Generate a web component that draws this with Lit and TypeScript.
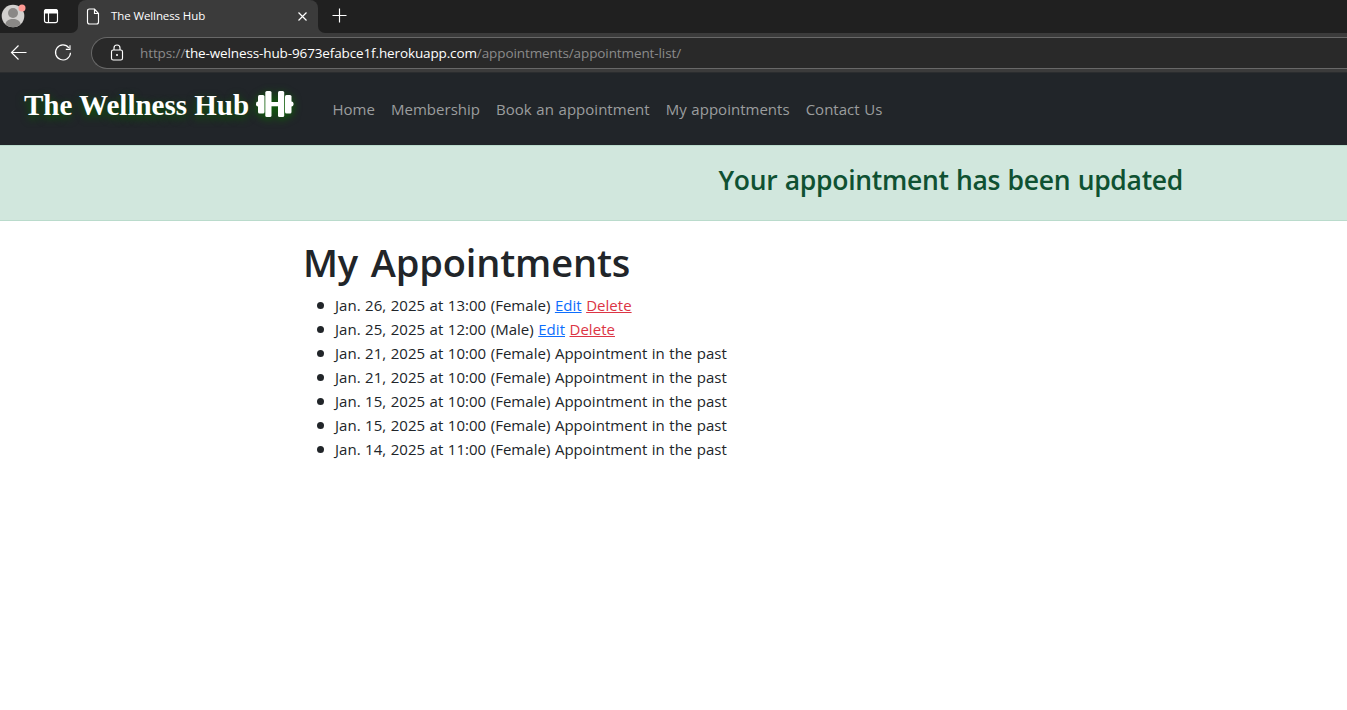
import { LitElement, html, css, nothing } from "lit";
import { customElement } from "lit/decorators.js";

const navLinks = ["Home", "Membership", "Book an appointment", "My appointments", "Contact Us"];

const appointments = [
  { when: "Jan. 26, 2025 at 13:00 (Female)", past: false },
  { when: "Jan. 25, 2025 at 12:00 (Male)", past: false },
  { when: "Jan. 21, 2025 at 10:00 (Female)", past: true },
  { when: "Jan. 21, 2025 at 10:00 (Female)", past: true },
  { when: "Jan. 15, 2025 at 10:00 (Female)", past: true },
  { when: "Jan. 15, 2025 at 10:00 (Female)", past: true },
  { when: "Jan. 14, 2025 at 11:00 (Female)", past: true },
];

@customElement("browser-chrome")
class BrowserChrome extends LitElement {
  static styles = css`
    :host { display: block; height: 73px; background: #3b3b3b; font-family: "Open Sans", "Noto Sans", sans-serif; }
    svg { display: block; flex: none; fill: none; stroke: #fff; stroke-width: 1.15; }
    .tabs { display: flex; height: 33px; background: #3b3b3b; }
    .left { width: 78px; height: 33px; background: #202020; border-bottom-right-radius: 7px; flex: none; }
    .tabwrap { background: #202020; flex: none; }
    .tab { display: flex; align-items: center; width: 240px; height: 33px; box-sizing: border-box; background: #3b3b3b; border-radius: 8px 8px 0 0; padding: 0 10px 0 8px; color: #fff; }
    .title { font-size: 11.5px; line-height: 30px; padding-bottom: 2px; flex: 1; margin-left: 10px; letter-spacing: -0.1px; white-space: nowrap; }
    .right { flex: 1; background: #202020; border-bottom-left-radius: 7px; }
    .bar { display: flex; height: 40px; box-sizing: border-box; border-bottom: 1px solid #2b2d2f; }
    .buttons { width: 91px; }
    .address { display: flex; align-items: center; flex: 1; height: 32px; box-sizing: border-box; margin-top: 4px; border: 1px solid #686868; border-right: 0; border-radius: 16px 0 0 16px; background: #292929; padding-left: 17px; }
    .url { margin-left: 15px; font-size: 13.5px; color: #8b8b8b; white-space: nowrap; line-height: 28px; letter-spacing: -0.1px; }
    .host { color: #fff; letter-spacing: -0.125px; }
  `;

  render() {
    return html`
      <div class="tabs">
        <div class="left">
          <svg width="78" height="33" viewBox="0 0 78 33">
            <circle cx="13" cy="16" r="11.3" fill="#d2d0ce" stroke="none" />
            <circle cx="13" cy="13" r="5" fill="#8a8886" stroke="none" />
            <path d="M5.5 24C6 20.5 9 19 13 19s7 1.500 7.500 5C17 28.300 9 28.300 5.500 24z" fill="#8a8886" stroke="none" />
            <circle cx="22" cy="8" r="3.500" fill="#ff9a94" stroke="none" />
            <rect x="44.500" y="9.600" width="13" height="13" rx="2.200" />
            <path d="M44.500 13V11.500Q44.500 9.500 46.500 9.500H55.500Q57.500 9.500 57.500 11.500V13z" fill="#fff" />
            <path d="M48.500 13v9.500" />
          </svg>
        </div>
        <div class="tabwrap">
          <div class="tab">
            <svg width="15" height="18" viewBox="0 0 15 18">
              <path d="M3.500 1H8.500L12.500 5.500V14Q12.500 16 10.500 16H3.500Q1.500 16 1.500 14V3Q1.500 1 3.500 1zM8.500 1V5.500H12.500" />
            </svg>
            <span class="title">The Wellness Hub</span>
            <svg width="11" height="11" viewBox="0 0 11 11"><path d="M1.500 1.500l8 8M9.500 1.500l-8 8" /></svg>
          </div>
        </div>
        <div class="right">
          <svg width="44" height="33" viewBox="0 0 44 33"><path d="M14.500 15.500h14M21.500 8.500v14" /></svg>
        </div>
      </div>
      <div class="bar">
        <svg class="buttons" width="91" height="39" viewBox="0 0 91 39">
          <path d="M26.500 19.500H11.500M18.500 12.500l-7 7 7 7" />
          <path d="M68.900 14.800A7.500 7.500 0 1 0 70.500 19.800M70 12.300V16.300H65.800" />
        </svg>
        <div class="address">
          <svg width="16" height="18" viewBox="0 0 16 18">
            <rect x="2.500" y="6" width="11" height="10" rx="1.800" />
            <path d="M5 6V4a3 3 0 0 1 6 0V6" />
            <circle cx="8" cy="11" r="1" fill="#fff" stroke="none" />
          </svg>
          <span class="url">https://<span class="host">the-welness-hub-9673efabce1f.herokuapp.com</span>/appointments/appointment-list/</span>
        </div>
      </div>
    `;
  }
}

@customElement("app-root")
class AppRoot extends LitElement {
  static styles = css`
    :host { display: block; height: 710px; overflow: hidden; background: #fff; color: #212529; font-family: "Open Sans", "Noto Sans", sans-serif; font-size: 15px; line-height: 24px; }
    .navbar { display: flex; height: 72px; background: #212529; }
    .brand { display: flex; margin-left: 24px; width: 300.500px; flex: none; color: #fff; font-family: "Liberation Serif", serif; font-size: 29px; font-weight: 700; line-height: 36px; padding-top: 14px; white-space: nowrap; text-shadow: 0 3px 8px #0a5c00; }
    .name { letter-spacing: 0; width: 226px; }
    .dumbbell { display: block; margin: 3px 0 0 6px; overflow: visible; fill: #fff; filter: drop-shadow(0 2px 4px #0a6c00); }
    nav { display: flex; padding-top: 24px; }
    nav a { padding: 0 8px; color: #9b9d9e; white-space: nowrap; letter-spacing: 0.020px; word-spacing: 0.700px; }
    .alert { height: 76px; box-sizing: border-box; background: #d1e7dd; border: solid #badbcc; border-width: 1px 0; padding: 17px 164px 0 0; text-align: right; color: #0f5132; }
    .alert h3 { margin: 0; font-size: 26.500px; line-height: 34px; font-weight: 600; letter-spacing: -0.300px; word-spacing: 0.800px; }
    main { padding: 17px 303px 0; }
    h1 { margin: 0 0 7px; font-size: 38px; line-height: 48px; font-weight: 600; letter-spacing: -0.150px; word-spacing: 3px; }
    ul { margin: 0; padding: 0 0 0 14px; list-style: none; letter-spacing: 0.030px; word-spacing: 0.550px; }
    li { display: flex; align-items: center; height: 24px; white-space: nowrap; }
    li::before { content: ""; width: 7px; height: 7px; margin: 1px 11px 0 0; border-radius: 50%; background: #212529; }
    .entry { display: block; }
    .edit, .delete { text-decoration: underline; }
    .edit { color: #0d6efd; }
    .delete { color: #dc3545; }
  `;

  render() {
    return html`
      <browser-chrome></browser-chrome>
      <header class="navbar">
        <div class="brand">
          <span class="name">The Wellness Hub</span>
          <svg class="dumbbell" width="38" height="28" viewBox="0 0 38 28">
            <rect x="0" y="11.500" width="5" height="5" rx="2" />
            <rect x="2" y="5" width="6.500" height="18.500" rx="1.500" />
            <rect x="9.300" y="1" width="6.200" height="26" rx="1.500" />
            <rect x="14" y="12" width="10" height="4.300" />
            <rect x="22" y="1" width="6.200" height="26" rx="1.500" />
            <rect x="29" y="5" width="6.500" height="18.500" rx="1.500" />
            <rect x="32.500" y="11.500" width="5" height="5" rx="2" />
          </svg>
        </div>
        <nav>${navLinks.map((label) => html`<a>${label}</a>`)}</nav>
      </header>
      <div class="alert"><h3>Your appointment has been updated</h3></div>
      <main>
        <h1>My Appointments</h1>
        <ul>
          ${appointments.map((a) => html`<li><span class="entry">${a.when} ${a.past ? "Appointment in the past" : nothing}${a.past ? nothing : html`<a class="edit">Edit</a> <a class="delete">Delete</a>`}</span></li>`)}
        </ul>
      </main>
    `;
  }
}
